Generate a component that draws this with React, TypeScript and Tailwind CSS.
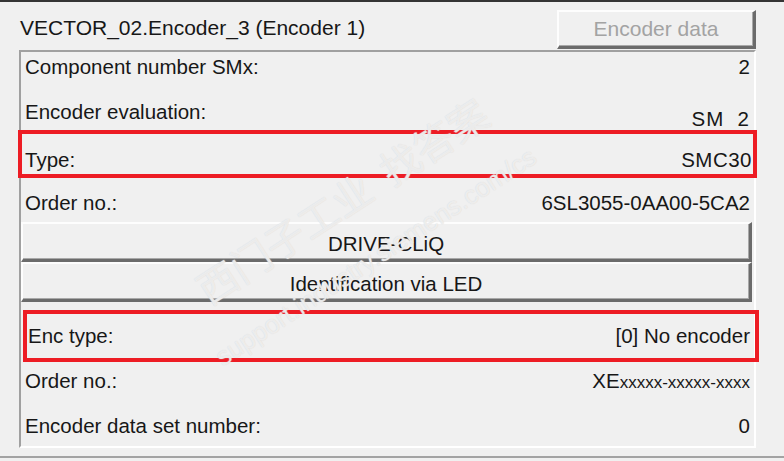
import React from 'react';

const rows1 = [
  { label: 'Component number SMx:', value: '2' },
];

function Btn({ children, className = '' }: { children: React.ReactNode; className?: string }) {
  return (
    <div
      className={`flex items-center justify-center bg-[#f0f0f0] border-t-2 border-l-2 border-t-[#fdfdfd] border-l-[#fdfdfd] border-b-[3px] border-r-[3px] border-b-[#6b6b6b] border-r-[#6b6b6b] shadow-[inset_-1px_-1px_0_#a8a8a8] ${className}`}
    >
      {children}
    </div>
  );
}

export default function App() {
  return (
    <div
      className="relative w-[784px] h-[461px] overflow-hidden bg-[#f0f0f0] text-[#171717]"
      style={{ fontFamily: '"Liberation Sans", Arial, sans-serif' }}
    >
      <div className="h-[2px] bg-[#353535]" />

      {/* Header */}
      <div className="flex items-center h-[48px] pl-[20px] pr-[28px]">
        <span className="text-[21px] leading-none flex-1 pt-[2px]">VECTOR_02.Encoder_3 (Encoder 1)</span>
        <Btn className="w-[199px] h-[39px] mt-[6px] text-[21px] text-[#a3a3a3]">Encoder data</Btn>
      </div>

      {/* Panel */}
      <div className="ml-[19px] w-[737px] h-[398px] border-t-2 border-l-2 border-[#a0a0a0] border-r-2 border-r-white border-b-2 border-b-white text-[20.5px] leading-none">
        {rows1.map((r) => (
          <div key={r.label} className="flex items-center justify-between h-[31px] pl-[4px] pr-[4px]">
            <span>{r.label}</span>
            <span>{r.value}</span>
          </div>
        ))}
        <div className="flex items-center justify-between h-[47px] pt-[11px] pl-[4px] pr-[4px]">
          <span>Encoder evaluation:</span>
          <span className="relative top-[7px] tracking-[1px]">SM&nbsp;&nbsp;2</span>
        </div>

        <div className="flex items-center justify-between h-[48px] -ml-[3px] -mr-[3px] border-4 border-[#ed1c24] pt-[13px] pl-[3px] pr-[1px]">
          <span>Type:</span>
          <span className="tracking-[0.5px]">SMC30</span>
        </div>

        <div className="flex items-center justify-between h-[44px] pt-[6px] pl-[4px] pr-[4px]">
          <span>Order no.:</span>
          <span>6SL3055-0AA00-5CA2</span>
        </div>

        <Btn className="h-[40px] mr-[2px] pt-[5px]">DRIVE-CLiQ</Btn>
        <Btn className="h-[40px] mr-[2px] pt-[5px]">Identification via LED</Btn>

        <div className="h-[8px]" />

        <div className="flex items-center justify-between h-[52px] ml-[2px] -mr-[5px] border-4 border-[#ed1c24] pl-[1px] pr-[5px]">
          <span>Enc type:</span>
          <span>[0] No encoder</span>
        </div>

        <div className="flex items-center justify-between h-[38px] pl-[4px] pr-[4px]">
          <span>Order no.:</span>
          <span>
            XE<span className="text-[17px]">xxxxx-xxxxx-xxxx</span>
          </span>
        </div>

        <div className="flex items-center justify-between h-[43px] pt-[10px] pl-[4px] pr-[4px]">
          <span>Encoder data set number:</span>
          <span>0</span>
        </div>
      </div>

      <div className="h-[8px]" />
      <div className="h-[2px] bg-[#a3a3a3]" />

      {/* watermark */}
      <div className="pointer-events-none absolute left-[200px] top-[262px] -rotate-[33deg] origin-left whitespace-nowrap text-[40px] text-white/60 [text-shadow:0_0_1px_#d0d0d0]" style={{ fontFamily: '"Noto Sans CJK SC", sans-serif' }}>
        西门子工业&nbsp;&nbsp;找答案
      </div>
      <div className="pointer-events-none absolute left-[218px] top-[340px] -rotate-[33deg] origin-left whitespace-nowrap text-[26px] text-white/60 [text-shadow:0_0_1px_#d0d0d0]">
        support.industry.siemens.com/cs
      </div>
    </div>
  );
}
